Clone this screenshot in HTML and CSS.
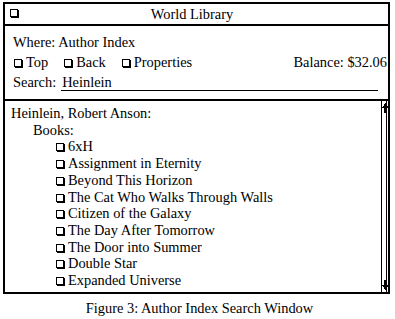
FILE: index.html
```html
<!DOCTYPE html>
<html>
<head>
<meta charset="utf-8">
<title>World Library</title>
<link rel="stylesheet" href="styles.css">
</head>
<body>
<div class="window">
  <div class="titlebar">
    <span class="box title-box"></span>
    <span class="title">World Library</span>
    <span></span>
  </div>
  <div class="header">
    <div class="row">Where: Author Index</div>
    <div class="row toolbar">
      <div class="btns">
        <span class="btn"><span class="box"></span>Top</span>
        <span class="btn"><span class="box"></span>Back</span>
        <span class="btn"><span class="box"></span>Properties</span>
      </div>
      <span class="balance">Balance: $32.06</span>
    </div>
    <div class="row search">
      <span class="label">Search:</span>
      <span class="field">Heinlein</span>
    </div>
  </div>
  <div class="content">
    <div class="list">
      <div class="author">Heinlein, Robert Anson:</div>
      <div class="section">Books:</div>
      <ul class="books">
        <li><span class="box"></span>6xH</li>
        <li><span class="box"></span>Assignment in Eternity</li>
        <li><span class="box"></span>Beyond This Horizon</li>
        <li><span class="box"></span>The Cat Who Walks Through Walls</li>
        <li><span class="box"></span>Citizen of the Galaxy</li>
        <li><span class="box"></span>The Day After Tomorrow</li>
        <li><span class="box"></span>The Door into Summer</li>
        <li><span class="box"></span>Double Star</li>
        <li><span class="box"></span>Expanded Universe</li>
      </ul>
    </div>
    <div class="scrollbar">
      <svg class="arrow arrow-up" viewBox="0 0 7 10" width="7" height="10"><path d="M3.5 0 L7 5 L5 5 L5 10 L2 10 L2 5 L0 5 Z"/></svg>
      <svg class="arrow arrow-down" viewBox="0 0 7 10" width="7" height="10"><path d="M2 0 L5 0 L5 5 L7 5 L3.5 10 L0 5 L2 5 Z"/></svg>
    </div>
  </div>
</div>
<div class="caption">Figure 3: Author Index Search Window</div>
</body>
</html>
```

FILE: styles.css
```css
html, body {
  margin: 0;
  padding: 0;
  background: #fff;
}

body {
  font-family: "Liberation Serif", "Times New Roman", serif;
  font-size: 14.4px;
  line-height: 20px;
  color: #000;
}

.window {
  margin: 2px 0 0 3px;
  width: 383px;
  height: 288px;
  border: 2px solid #000;
  display: flex;
  flex-direction: column;
}

.box {
  display: inline-block;
  width: 6px;
  height: 6px;
  border: 1px solid #000;
  box-shadow: 1px 1px 0 #000;
  background: #fff;
}

.titlebar {
  height: 20px;
  border-bottom: 2px solid #000;
  display: grid;
  grid-template-columns: 1fr auto 1fr;
  padding: 0 14px 0 5px;
}

.title-box {
  align-self: start;
  margin-top: 5px;
}

.header {
  padding: 6px 1px 7px 8px;
  border-bottom: 2px solid #000;
}

.row {
  height: 20px;
}

.toolbar {
  display: flex;
  justify-content: space-between;
}

.btns {
  display: flex;
  gap: 16px;
  margin-left: 1px;
}

.btn .box {
  margin-right: 4px;
}

.search {
  display: flex;
  align-items: baseline;
}

.field {
  flex: 1;
  margin: 0 9px 0 5px;
  padding-left: 1px;
  line-height: 15px;
  border-bottom: 1px solid #000;
}

.content {
  flex: 1;
  display: flex;
  min-height: 0;
}

.list {
  flex: 1;
  padding: 4px 0 0 6px;
  line-height: 16.7px;
  overflow: hidden;
}

.section {
  padding-left: 22px;
}

.books {
  list-style: none;
  margin: 0;
  padding: 0 0 0 45px;
}

.books .box {
  margin-right: 4px;
}

.scrollbar {
  position: relative;
  width: 4px;
  border-left: 1px solid #000;
  border-right: 1px solid #000;
  margin-right: 1px;
}

.arrow {
  position: absolute;
  left: 0;
  display: block;
  fill: #000;
  shape-rendering: crispEdges;
}

.arrow-up {
  top: 2px;
}

.arrow-down {
  bottom: 2px;
}

.caption {
  margin-top: 4px;
  padding-left: 4px;
  text-align: center;
}
```
